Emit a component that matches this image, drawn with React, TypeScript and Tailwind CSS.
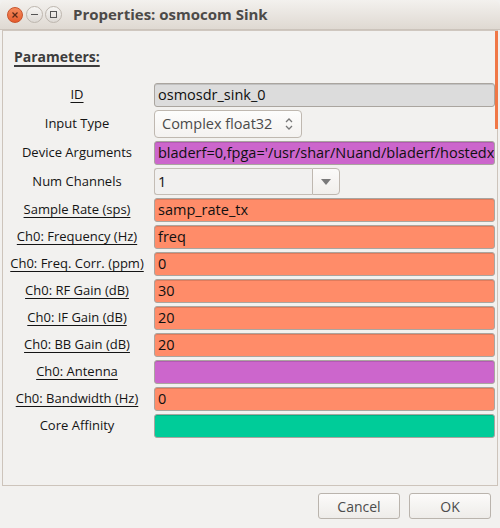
import React from "react";

type Row = {
  label: string;
  underline: boolean;
  kind: "entry" | "combo" | "comboentry";
  value: string;
  bg?: string;
  h: string;
};

const rows: Row[] = [
  { label: "ID", underline: true, kind: "entry", value: "osmosdr_sink_0", bg: "bg-[#dcdcdc]", h: "h-[24px]" },
  { label: "Input Type", underline: false, kind: "combo", value: "Complex float32", h: "h-[28px]" },
  { label: "Device Arguments", underline: false, kind: "entry", value: "bladerf=0,fpga='/usr/shar/Nuand/bladerf/hostedx", bg: "bg-[#cc66cc]", h: "h-[24px]" },
  { label: "Num Channels", underline: false, kind: "comboentry", value: "1", h: "h-[27px]" },
  { label: "Sample Rate (sps)", underline: true, kind: "entry", value: "samp_rate_tx", bg: "bg-[#ff8c69]", h: "h-[24px]" },
  { label: "Ch0: Frequency (Hz)", underline: true, kind: "entry", value: "freq", bg: "bg-[#ff8c69]", h: "h-[24px]" },
  { label: "Ch0: Freq. Corr. (ppm)", underline: true, kind: "entry", value: "0", bg: "bg-[#ff8c69]", h: "h-[24px]" },
  { label: "Ch0: RF Gain (dB)", underline: true, kind: "entry", value: "30", bg: "bg-[#ff8c69]", h: "h-[24px]" },
  { label: "Ch0: IF Gain (dB)", underline: true, kind: "entry", value: "20", bg: "bg-[#ff8c69]", h: "h-[24px]" },
  { label: "Ch0: BB Gain (dB)", underline: true, kind: "entry", value: "20", bg: "bg-[#ff8c69]", h: "h-[24px]" },
  { label: "Ch0: Antenna", underline: true, kind: "entry", value: "", bg: "bg-[#cc66cc]", h: "h-[24px]" },
  { label: "Ch0: Bandwidth (Hz)", underline: true, kind: "entry", value: "0", bg: "bg-[#ff8c69]", h: "h-[24px]" },
  { label: "Core Affinity", underline: false, kind: "entry", value: "", bg: "bg-[#00cc99]", h: "h-[24px]" },
];

function Field({ r }: { r: Row }) {
  if (r.kind === "entry") {
    return (
      <div
        className={`${r.h} w-[341px] ${r.bg} border border-[#aaa59f] rounded-[3px] flex items-center pl-[3px] overflow-hidden whitespace-nowrap text-[14.5px] text-[#101010] shadow-[inset_0_1px_0_rgba(0,0,0,0.12)]`}
      >
        <span className="whitespace-nowrap">{r.value}</span>
      </div>
    );
  }
  if (r.kind === "combo") {
    return (
      <div className={`${r.h} w-[148px] bg-gradient-to-b from-[#fdfdfc] to-[#f4f2f0] border border-[#bfb8b0] rounded-[4px] flex items-center justify-between pl-[7px] pr-[8px] text-[14.5px] text-[#4a4a4a]`}>
        <span>{r.value}</span>
        <svg width="8" height="14" viewBox="0 0 8 14">
          <path d="M1 5 L4 2 L7 5" fill="none" stroke="#777" strokeWidth="1.3" />
          <path d="M1 9 L4 12 L7 9" fill="none" stroke="#777" strokeWidth="1.3" />
        </svg>
      </div>
    );
  }
  return (
    <div className={`${r.h} w-[186px] flex`}>
      <div className="flex-1 bg-[#f1f0ef] border border-[#c4bdb5] border-r-0 rounded-l-[3px] flex items-center pl-[3px] text-[14.5px] text-[#101010]">
        {r.value}
      </div>
      <div className="w-[28px] bg-gradient-to-b from-[#fbfaf9] to-[#f1efec] border border-[#bfb8b0] rounded-r-[4px] flex items-center justify-center">
        <svg width="10" height="6" viewBox="0 0 10 6">
          <path d="M0 0 L10 0 L5 6 Z" fill="#7a7a7a" />
        </svg>
      </div>
    </div>
  );
}

export default function App() {
  return (
    <div
      className="w-[500px] h-[528px] bg-[#f2f1ef] flex flex-col overflow-hidden"
      style={{ fontFamily: "'Open Sans', 'Noto Sans', sans-serif" }}
    >
      {/* Title bar */}
      <div className="h-[30px] shrink-0 bg-gradient-to-b from-[#f3f1ee] to-[#dfd9d2] rounded-t-[6px] flex items-center border-b border-[#cbc3bb]">
        <div className="flex items-center ml-[7px] gap-[2px]">
          <div className="w-[16px] h-[16px] rounded-full bg-gradient-to-b from-[#f58b5c] to-[#e55a2b] border border-[#c8532b] flex items-center justify-center">
            <svg width="6" height="6" viewBox="0 0 6 6">
              <path d="M0.5 0.5 L5.5 5.5 M5.5 0.5 L0.5 5.5" stroke="#5a2a18" strokeWidth="1.2" />
            </svg>
          </div>
          <div className="w-[17px] h-[17px] rounded-full bg-gradient-to-b from-[#f7f6f4] to-[#dedad5] border border-[#bdb6ae] flex items-center justify-center ml-[1px]">
            <div className="w-[7px] h-[1px] bg-[#555]" />
          </div>
          <div className="w-[17px] h-[17px] rounded-full bg-gradient-to-b from-[#f7f6f4] to-[#dedad5] border border-[#bdb6ae] flex items-center justify-center">
            <div className="w-[7px] h-[7px] border border-[#555]" />
          </div>
        </div>
        <div className="ml-[11px] text-[15px] font-bold text-[#4c4a48]">
          Properties: osmocom Sink
        </div>
      </div>

      {/* Frame */}
      <div className="relative ml-[2px] w-[496px] h-[456px] border border-[#cdc4bb] border-t-[#cfc7bf] shrink-0">
        <div className="absolute right-[-1px] top-0 w-[3px] h-[98px] bg-[#f07746]" />
        <div className="pl-[11px] pt-[13px] h-[52px]">
          <span className="text-[14px] font-bold text-[#3c3c3c] underline decoration-2 underline-offset-[3px]">
            Parameters:
          </span>
        </div>
        <div className="flex flex-col gap-[3px]">
          {rows.map((r, i) => (
            <div key={i} className="flex items-center">
              <div className="w-[148px] flex justify-center text-[13px] text-[#141414]">
                <span className={r.underline ? "underline underline-offset-[3px]" : ""}>{r.label}</span>
              </div>
              <div className="ml-[3px]">
                <Field r={r} />
              </div>
            </div>
          ))}
        </div>
      </div>

      {/* Buttons */}
      <div className="flex justify-end gap-[9px] pr-[9px] pt-[7px]">
        <button className="w-[82px] h-[26px] rounded-[3px] border border-[#bab4ad] bg-gradient-to-b from-[#fcfbfa] to-[#eeece9] text-[14px] text-[#4c4c4c]">
          Cancel
        </button>
        <button className="w-[82px] h-[26px] rounded-[3px] border border-[#bab4ad] bg-gradient-to-b from-[#fcfbfa] to-[#eeece9] text-[14px] text-[#4c4c4c]">
          OK
        </button>
      </div>
    </div>
  );
}
